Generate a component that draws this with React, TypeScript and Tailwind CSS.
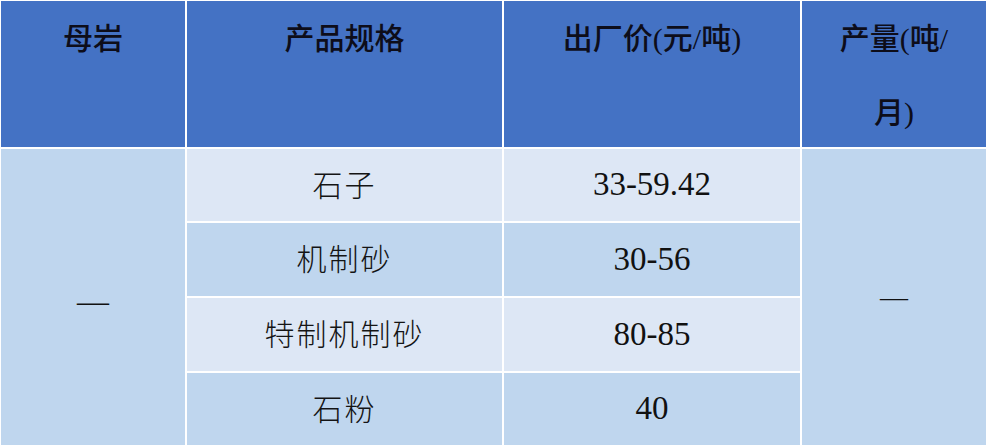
const head = "text-center text-[30px] leading-[74px] pt-[1px] font-medium text-[#0d0d1a] bg-[#4472C4]";

const rows = [
  { spec: "石子", price: "33-59.42", bg: "bg-[#DDE7F5]" },
  { spec: "机制砂", price: "30-56", bg: "bg-[#BFD6EE]" },
  { spec: "特制机制砂", price: "80-85", bg: "bg-[#DDE7F5]" },
  { spec: "石粉", price: "40", bg: "bg-[#BFD6EE]" },
];

export default function App() {
  return (
    <div className="w-[986px] h-[445px] overflow-hidden bg-white pl-[1px] pt-[1px] font-['Liberation_Serif','Noto_Sans_CJK_SC',serif]">
      <div className="grid grid-cols-[184px_315px_296px_184px] grid-rows-[146px_72px_73px_73px_72px] gap-[2px]">
        <div className={head}>母岩</div>
        <div className={head}>产品规格</div>
        <div className={head}>出厂价(元/吨)</div>
        <div className={head}>
          产量(吨/
          <br />
          月)
        </div>

        <div className="row-span-4 col-start-1 row-start-2 flex items-center justify-center bg-[#BFD6EE] text-[32px] text-[#111] pt-[8px]">
          —
        </div>

        {rows.map((r, i) => (
          <div key={r.spec} className="contents">
            <div
              className={`${r.bg} col-start-2 flex items-center justify-center text-[30px] font-light tracking-[2px] text-[#141414]`}
              style={{ gridRowStart: i + 2 }}
            >
              {r.spec}
            </div>
            <div
              className={`${r.bg} col-start-3 flex items-center justify-center text-[33px] text-[#111]`}
              style={{ gridRowStart: i + 2 }}
            >
              {r.price}
            </div>
          </div>
        ))}

        <div className="row-span-4 col-start-4 row-start-2 flex items-center justify-center bg-[#BFD6EE] text-[28px] text-[#111]">
          —
        </div>
      </div>
    </div>
  );
}
